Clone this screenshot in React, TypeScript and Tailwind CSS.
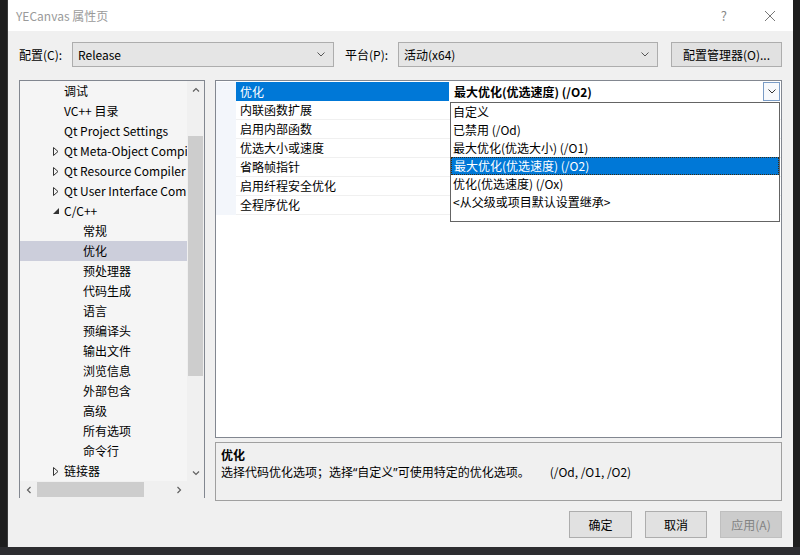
import React from "react";

const FONT = { fontFamily: '"Noto Sans CJK SC", "Noto Sans", sans-serif' };

type TreeItem = { label: string; level: 0 | 1; arrow?: "closed" | "open"; selected?: boolean };

const treeItems: TreeItem[] = [
  { label: "调试", level: 0 },
  { label: "VC++ 目录", level: 0 },
  { label: "Qt Project Settings", level: 0 },
  { label: "Qt Meta-Object Compiler", level: 0, arrow: "closed" },
  { label: "Qt Resource Compiler", level: 0, arrow: "closed" },
  { label: "Qt User Interface Compiler", level: 0, arrow: "closed" },
  { label: "C/C++", level: 0, arrow: "open" },
  { label: "常规", level: 1 },
  { label: "优化", level: 1, selected: true },
  { label: "预处理器", level: 1 },
  { label: "代码生成", level: 1 },
  { label: "语言", level: 1 },
  { label: "预编译头", level: 1 },
  { label: "输出文件", level: 1 },
  { label: "浏览信息", level: 1 },
  { label: "外部包含", level: 1 },
  { label: "高级", level: 1 },
  { label: "所有选项", level: 1 },
  { label: "命令行", level: 1 },
  { label: "链接器", level: 0, arrow: "closed" },
];

const props = ["优化", "内联函数扩展", "启用内部函数", "优选大小或速度", "省略帧指针", "启用纤程安全优化", "全程序优化"];

const options = [
  "自定义",
  "已禁用 (/Od)",
  "最大优化(优选大小) (/O1)",
  "最大优化(优选速度) (/O2)",
  "优化(优选速度) (/Ox)",
  "<从父级或项目默认设置继承>",
];

function Chevron({ dir, className }: { dir: "up" | "down" | "left" | "right"; className?: string }) {
  const d = {
    up: "M1 6 L5 2 L9 6",
    down: "M1 2 L5 6 L9 2",
    left: "M6 1 L2 5 L6 9",
    right: "M2 1 L6 5 L2 9",
  }[dir];
  const vb = dir === "up" || dir === "down" ? "0 0 10 8" : "0 0 8 10";
  return (
    <svg viewBox={vb} className={className} fill="none" stroke="currentColor" strokeWidth="1.6">
      <path d={d} />
    </svg>
  );
}

function Select({ value, width }: { value: string; width: string }) {
  return (
    <div className={`flex h-[25px] ${width} items-center justify-between border border-[#adadad] bg-[#e5e5e5] pl-[5px] pr-[8px]`}>
      <span>{value}</span>
      <svg viewBox="0 0 8 5" className="h-[5px] w-[8px] text-[#555]" fill="none" stroke="currentColor" strokeWidth="1">
        <path d="M0.5 0.5 L4 4 L7.5 0.5" />
      </svg>
    </div>
  );
}

function Tree() {
  return (
    <div className="flex h-[418px] w-[186px] flex-col border border-[#828790] bg-[#f5f5f5]">
      <div className="flex flex-1">
        <div className="flex flex-1 flex-col overflow-hidden">
          {treeItems.map((item) => (
            <div
              key={item.label}
              className={`flex h-[20px] shrink-0 items-center whitespace-nowrap ${item.selected ? "bg-[#cccedb]" : ""}`}
            >
              <span className="flex w-[44px] shrink-0 justify-end pr-[5px]">
                {item.arrow === "closed" && (
                  <svg viewBox="0 0 6 9" className="h-[9px] w-[6px]" fill="none" stroke="#333" strokeWidth="1">
                    <path d="M0.5 0.5 L5 4.5 L0.5 8.5 Z" />
                  </svg>
                )}
                {item.arrow === "open" && (
                  <svg viewBox="0 0 6 6" className="h-[6px] w-[6px]" fill="#333">
                    <path d="M6 0 L6 6 L0 6 Z" />
                  </svg>
                )}
              </span>
              <span className={item.level === 1 ? "pl-[19px]" : ""}>{item.label}</span>
            </div>
          ))}
        </div>
        <div className="flex w-[17px] shrink-0 flex-col bg-[#f0f0f0]">
          <div className="flex h-[17px] items-center justify-center text-[#606060]">
            <Chevron dir="up" className="h-[6px] w-[8px]" />
          </div>
          <div className="flex flex-1 flex-col px-[1px]">
            <div className="h-[38px]" />
            <div className="h-[240px] bg-[#cdcdcd]" />
          </div>
          <div className="flex h-[17px] items-center justify-center text-[#606060]">
            <Chevron dir="down" className="h-[6px] w-[8px]" />
          </div>
        </div>
      </div>
      <div className="flex h-[17px] shrink-0">
        <div className="flex flex-1 items-center bg-[#f0f0f0]">
          <div className="flex w-[17px] justify-center text-[#606060]">
            <Chevron dir="left" className="h-[8px] w-[6px]" />
          </div>
          <div className="h-[15px] w-[107px] bg-[#cdcdcd]" />
          <div className="flex-1" />
          <div className="flex w-[17px] justify-center text-[#606060]">
            <Chevron dir="right" className="h-[8px] w-[6px]" />
          </div>
        </div>
        <div className="w-[17px] bg-[#f0f0f0]" />
      </div>
    </div>
  );
}

function PropertyGrid() {
  return (
    <div className="relative h-[358px] border border-[#828790] bg-white pt-[1px]">
      {props.map((p, i) => (
        <div key={p} className="flex h-[19px]">
          <div className="w-[20px] shrink-0 bg-[#f3f6fb]" />
          <div
            className={`flex w-[213px] shrink-0 items-center pl-[4px] ${
              i === 0 ? "bg-[#0078d7] text-white" : "border-b border-[#f0f0f0]"
            }`}
          >
            {p}
          </div>
          {i === 0 ? (
            <div className="flex flex-1 items-center justify-between pl-[5px] pr-[1px]">
              <span className="font-bold">最大优化(优选速度) (/O2)</span>
              <div className="flex h-[19px] w-[17px] items-center justify-center border border-[#7a9cc6] bg-[#f7f9fc]">
                <svg viewBox="0 0 8 5" className="h-[5px] w-[8px]" fill="none" stroke="#333" strokeWidth="1">
                  <path d="M0.5 0.5 L4 4 L7.5 0.5" />
                </svg>
              </div>
            </div>
          ) : (
            <div className="flex-1 border-b border-[#f0f0f0]" />
          )}
        </div>
      ))}
      <div className="absolute left-[234px] top-[21px] flex h-[120px] w-[330px] flex-col border border-[#646464] bg-white">
        {options.map((o, i) => (
          <div
            key={o}
            className={`flex h-[18px] shrink-0 items-center pl-[2px] ${
              i === 3 ? "border border-dotted border-[#3a2a10] bg-[#0078d7] pl-[1px] text-white" : ""
            }`}
          >
            {o}
          </div>
        ))}
      </div>
    </div>
  );
}

export default function App() {
  return (
    <div className="flex h-[555px] w-[800px] flex-col bg-[#1e1e1e] text-[12px] text-black" style={FONT}>
      <div className="ml-[7px] flex h-[547px] w-[786px] flex-col border-l border-[#3a3a3a] bg-[#f0f0f0]">
        <div className="flex h-[31px] shrink-0 items-center bg-white pl-[8px] text-[#9a9a9a]">
          <span>YECanvas 属性页</span>
          <span className="ml-auto mr-[38px] text-[13px] text-[#888]">?</span>
          <svg viewBox="0 0 10 10" className="mr-[18px] h-[10px] w-[10px]" stroke="#777" strokeWidth="1">
            <path d="M0 0 L10 10 M10 0 L0 10" />
          </svg>
        </div>
        <div className="flex flex-1 flex-col px-[11px] pt-[11px]">
          <div className="flex h-[25px] items-center">
            <span className="w-[53px]">配置(C):</span>
            <Select value="Release" width="w-[262px]" />
            <span className="ml-[11px] w-[53px]">平台(P):</span>
            <Select value="活动(x64)" width="w-[260px]" />
            <div className="ml-[13px] flex h-[25px] w-[111px] items-center justify-center border border-[#adadad] bg-[#e1e1e1]">
              配置管理器(O)...
            </div>
          </div>
          <div className="mt-[13px] flex gap-[10px]">
            <Tree />
            <div className="flex flex-1 flex-col gap-[4px]">
              <PropertyGrid />
              <div className="flex h-[59px] flex-col border border-[#a0a0a0] bg-[#f0f0f0] pl-[5px] pt-[2px]">
                <span className="font-bold leading-[19px]">优化</span>
                <span className="leading-[16px] whitespace-nowrap">
                  选择代码优化选项；选择<span style={{ fontFamily: '"Noto Sans", sans-serif' }}>“</span>自定义
                  <span style={{ fontFamily: '"Noto Sans", sans-serif' }}>”</span>可使用特定的优化选项。
                  <span className="ml-[20px]">(/Od, /O1, /O2)</span>
                </span>
              </div>
            </div>
          </div>
          <div className="mt-[10px] flex justify-end gap-[13px]">
            <div className="flex h-[27px] w-[63px] items-center justify-center border border-[#adadad] bg-[#e1e1e1]">确定</div>
            <div className="flex h-[27px] w-[62px] items-center justify-center border border-[#adadad] bg-[#e1e1e1]">取消</div>
            <div className="flex h-[27px] w-[62px] items-center justify-center border border-[#bfbfbf] bg-[#cccccc] text-[#838383]">
              应用(A)
            </div>
          </div>
        </div>
      </div>
      <div className="flex-1 bg-[#2d2d30]" />
    </div>
  );
}
